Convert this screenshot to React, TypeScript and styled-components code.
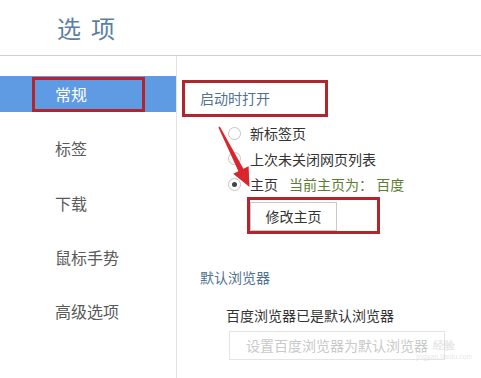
import React from "react";
import styled, { createGlobalStyle } from "styled-components";

const Global = createGlobalStyle`
  html, body { margin: 0; padding: 0; background: #fff; }
  body { font-family: "Noto Sans CJK SC", "Noto Sans", sans-serif; }
  * { box-sizing: border-box; }
`;

const RED = "#b3252c";

const Page = styled.div`
  position: relative;
  width: 481px;
  height: 378px;
  overflow: hidden;
  display: flex;
  flex-direction: column;
`;

const Header = styled.header`
  height: 56px;
  border-bottom: 1px solid #cfcfcf;
  padding-left: 57px;
  display: flex;
  align-items: center;
`;

const Title = styled.h1`
  margin: 0;
  font-size: 24px;
  font-weight: 400;
  line-height: 54px;
  color: #5b7fa2;
  letter-spacing: 10px;
`;

const Body = styled.div`
  flex: 1;
  display: flex;
`;

const Sidebar = styled.nav`
  width: 177px;
  border-right: 1px solid #e2e2e2;
  padding-top: 20px;
  display: flex;
  flex-direction: column;
  gap: 18.25px;
`;

const NavItem = styled.div<{ $active?: boolean }>`
  position: relative;
  height: 36px;
  line-height: 36px;
  padding-left: 55px;
  font-size: 16px;
  color: ${(p) => (p.$active ? "#ffffff" : "#5a5a5a")};
  background: ${(p) => (p.$active ? "#5e9be2" : "transparent")};
`;

const Mark = styled.span<{ $l: number; $t: number; $w: number; $h: number }>`
  position: absolute;
  left: ${(p) => p.$l}px;
  top: ${(p) => p.$t}px;
  width: ${(p) => p.$w}px;
  height: ${(p) => p.$h}px;
  border: 3px solid ${RED};
  pointer-events: none;
`;

const Main = styled.main`
  flex: 1;
  padding: 32px 0 0 23px;
  display: flex;
  flex-direction: column;
`;

const SectionTitle = styled.div<{ $mt?: number }>`
  position: relative;
  margin-top: ${(p) => p.$mt ?? 0}px;
  font-size: 14px;
  line-height: 20px;
  color: #4f7294;
`;

const RadioList = styled.div`
  margin-top: 12.5px;
  padding-left: 28px;
  display: flex;
  flex-direction: column;
`;

const RadioRow = styled.label`
  height: 25.5px;
  display: flex;
  align-items: center;
  font-size: 14px;
  color: #333;
`;

const Circle = styled.span<{ $checked?: boolean }>`
  width: 13px;
  height: 13px;
  border-radius: 50%;
  border: 1px solid #c4c4c4;
  background: #fff;
  margin-right: 9px;
  display: flex;
  align-items: center;
  justify-content: center;
  &::after {
    content: "";
    width: 5px;
    height: 5px;
    border-radius: 50%;
    background: ${(p) => (p.$checked ? "#444" : "transparent")};
  }
`;

const Hint = styled.span`
  margin-left: 11px;
  color: #5b7d2e;
`;

const ButtonWrap = styled.div<{ $ml: number; $mt: number }>`
  position: relative;
  margin-left: ${(p) => p.$ml}px;
  margin-top: ${(p) => p.$mt}px;
  align-self: flex-start;
`;

const Button = styled.button<{ $disabled?: boolean; $w: number }>`
  width: ${(p) => p.$w}px;
  height: 29px;
  border: 1px solid ${(p) => (p.$disabled ? "#e4e4e4" : "#c9c9c9")};
  background: #fff;
  font-family: inherit;
  font-size: 14px;
  color: ${(p) => (p.$disabled ? "#c9c9c9" : "#333")};
  padding: 0;
`;

const Info = styled.div`
  margin-top: 18px;
  padding-left: 26px;
  font-size: 14px;
  line-height: 20px;
  color: #333;
`;

const Arrow = styled.svg`
  position: absolute;
  left: 0;
  top: 0;
  width: 481px;
  height: 378px;
  pointer-events: none;
`;

const Watermark = styled.div`
  position: absolute;
  left: 416px;
  top: 338px;
  display: flex;
  flex-direction: column;
  align-items: center;
  font-family: "Liberation Sans", sans-serif;
  color: rgba(170, 170, 170, 0.3);
  pointer-events: none;
`;

const WmTop = styled.span`
  font-size: 11px;
  line-height: 14px;
  font-weight: 700;
`;

const WmBottom = styled.span`
  font-size: 7px;
  line-height: 9px;
`;

export default function App() {
  const nav = ["常规", "标签", "下载", "鼠标手势", "高级选项"];
  return (
    <>
      <Global />
      <Page>
        <Header>
          <Title>选项</Title>
        </Header>
        <Body>
          <Sidebar>
            {nav.map((n, i) => (
              <NavItem key={n} $active={i === 0}>
                {n}
                {i === 0 && <Mark $l={32} $t={1} $w={113} $h={35} />}
              </NavItem>
            ))}
          </Sidebar>
          <Main>
            <SectionTitle>
              启动时打开
              <Mark $l={-18} $t={-8} $w={146} $h={37} />
            </SectionTitle>
            <RadioList>
              <RadioRow>
                <Circle />
                新标签页
              </RadioRow>
              <RadioRow>
                <Circle />
                上次未关闭网页列表
              </RadioRow>
              <RadioRow>
                <Circle $checked />
                主页
                <Hint>当前主页为： 百度</Hint>
              </RadioRow>
            </RadioList>
            <ButtonWrap $ml={50} $mt={4.5}>
              <Button $w={87}>修改主页</Button>
              <Mark $l={-3} $t={-5} $w={133} $h={37} />
            </ButtonWrap>
            <SectionTitle $mt={36}>默认浏览器</SectionTitle>
            <Info>百度浏览器已是默认浏览器</Info>
            <ButtonWrap $ml={29} $mt={6}>
              <Button $disabled $w={216}>设置百度浏览器为默认浏览器</Button>
            </ButtonWrap>
          </Main>
        </Body>
        <Arrow viewBox="0 0 481 378">
          <polygon
            points="218.4,127.4 219.8,126.6 243.4,168.8 248.6,166.2 249.5,187 233.2,173.8 238.4,171.2"
            fill="#d8262d"
          />
        </Arrow>
        <Watermark>
          <WmTop>经验</WmTop>
          <WmBottom>jingyan.baidu.com</WmBottom>
        </Watermark>
      </Page>
    </>
  );
}
